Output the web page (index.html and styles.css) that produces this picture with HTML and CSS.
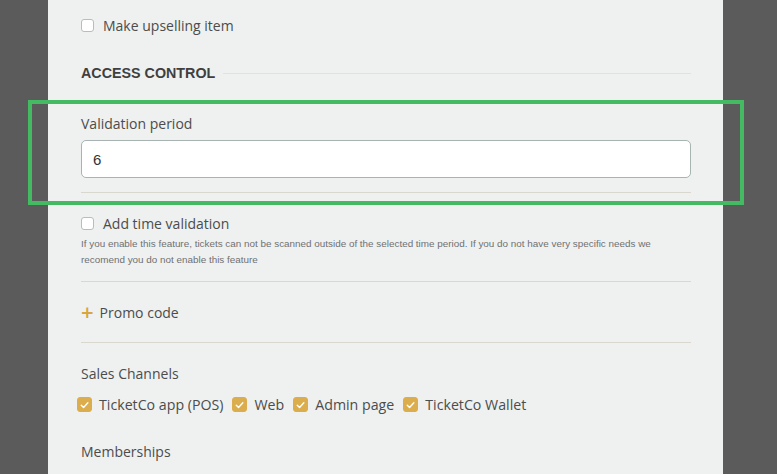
FILE: index.html
```html
<!DOCTYPE html>
<html>
<head>
<meta charset="utf-8">
<link rel="stylesheet" href="styles.css">
</head>
<body>
<div class="panel">
  <label class="check-row first">
    <span class="box"></span>
    <span class="label">Make upselling item</span>
  </label>

  <div class="section-title">
    <span>ACCESS CONTROL</span>
    <span class="rule"></span>
  </div>

  <div class="field">
    <div class="field-label">Validation period</div>
    <div class="input">6</div>
  </div>

  <div class="divider"></div>

  <label class="check-row">
    <span class="box"></span>
    <span class="label">Add time validation</span>
  </label>
  <p class="help">If you enable this feature, tickets can not be scanned outside of the selected time period. If you do not have very specific needs we recomend you do not enable this feature</p>

  <div class="divider"></div>

  <div class="promo"><span class="plus">+</span><span>Promo code</span></div>

  <div class="divider"></div>

  <div class="group-title">Sales Channels</div>
  <div class="channels">
    <span class="chan"><span class="box checked"><svg viewBox="0 0 14 14" width="14" height="14"><path d="M3.5 7.2 L6 9.6 L10.6 4.6" fill="none" stroke="#fff" stroke-width="1.5" stroke-linecap="round" stroke-linejoin="round"/></svg></span>TicketCo app (POS)</span>
    <span class="chan"><span class="box checked"><svg viewBox="0 0 14 14" width="14" height="14"><path d="M3.5 7.2 L6 9.6 L10.6 4.6" fill="none" stroke="#fff" stroke-width="1.5" stroke-linecap="round" stroke-linejoin="round"/></svg></span>Web</span>
    <span class="chan"><span class="box checked"><svg viewBox="0 0 14 14" width="14" height="14"><path d="M3.5 7.2 L6 9.6 L10.6 4.6" fill="none" stroke="#fff" stroke-width="1.5" stroke-linecap="round" stroke-linejoin="round"/></svg></span>Admin page</span>
    <span class="chan"><span class="box checked"><svg viewBox="0 0 14 14" width="14" height="14"><path d="M3.5 7.2 L6 9.6 L10.6 4.6" fill="none" stroke="#fff" stroke-width="1.5" stroke-linecap="round" stroke-linejoin="round"/></svg></span>TicketCo Wallet</span>
  </div>

  <div class="group-title member">Memberships</div>
</div>
<div class="highlight"></div>
</body>
</html>
```

FILE: styles.css
```css
html, body {
  margin: 0;
  padding: 0;
  height: 100%;
  overflow: hidden;
}
body {
  background: #5a5b5a;
  font-family: "Open Sans", "Noto Sans", sans-serif;
  color: #4c4c4c;
  position: relative;
}
.panel {
  margin-left: 48px;
  width: 610px;
  height: 474px;
  background: #eef1f0;
  padding: 14px 32px 0 33px;
  box-sizing: content-box;
}
.check-row {
  display: flex;
  align-items: center;
  gap: 9px;
  font-size: 14px;
  height: 22px;
}
.box {
  width: 13px;
  height: 13px;
  border: 1px solid #b9bcbb;
  border-radius: 3px;
  background: #fff;
  box-sizing: border-box;
  display: inline-flex;
  align-items: center;
  justify-content: center;
  flex: none;
}
.box.checked {
  width: 15px;
  height: 15px;
  background: #dcad4c;
  border-color: #dcad4c;
}
.section-title {
  display: flex;
  align-items: center;
  gap: 8px;
  margin-top: 27px;
  font-family: "Liberation Sans", Arial, sans-serif;
  font-weight: bold;
  font-size: 14.3px;
  color: #3f3f3f;
  height: 20px;
}
.section-title .rule {
  flex: 1;
  height: 1px;
  background: #dfe2e1;
}
.field {
  margin-top: 31px;
}
.field-label {
  font-size: 14px;
  height: 22px;
}
.input {
  margin-top: 4px;
  height: 38px;
  box-sizing: border-box;
  border: 1px solid #a7b4b1;
  border-radius: 5px;
  background: #fff;
  padding: 0 11px;
  display: flex;
  align-items: center;
  font-family: "Liberation Sans", Arial, sans-serif;
  font-size: 15px;
  color: #333;
}
.divider {
  height: 1px;
  background: #dad7cf;
  margin-top: 14px;
}
.divider + .check-row {
  margin-top: 19px;
}
.help {
  margin: 2px 0 0;
  font-family: "Liberation Sans", Arial, sans-serif;
  font-size: 9.9px;
  line-height: 16px;
  color: #707070;
}
.help + .divider {
  margin-top: 13px;
}
.promo {
  display: flex;
  align-items: center;
  gap: 6px;
  font-size: 14px;
  margin-top: 19px;
  height: 22px;
}
.plus {
  color: #d8a53f;
  font-size: 22px;
  font-weight: 600;
  line-height: 20px;
  margin-top: -2px;
}
.promo + .divider {
  margin-top: 19px;
}
.group-title {
  font-size: 14px;
  margin-top: 21px;
  height: 22px;
}
.channels {
  display: flex;
  align-items: center;
  gap: 9px;
  margin-top: 9px;
  margin-left: -4px;
  font-size: 14.2px;
}
.chan {
  display: inline-flex;
  align-items: center;
  gap: 7px;
}
.group-title.member {
  margin-top: 28px;
}
.highlight {
  position: absolute;
  left: 28px;
  top: 100px;
  width: 716px;
  height: 105px;
  border: 4px solid #44bb63;
  box-sizing: border-box;
  pointer-events: none;
}
```
